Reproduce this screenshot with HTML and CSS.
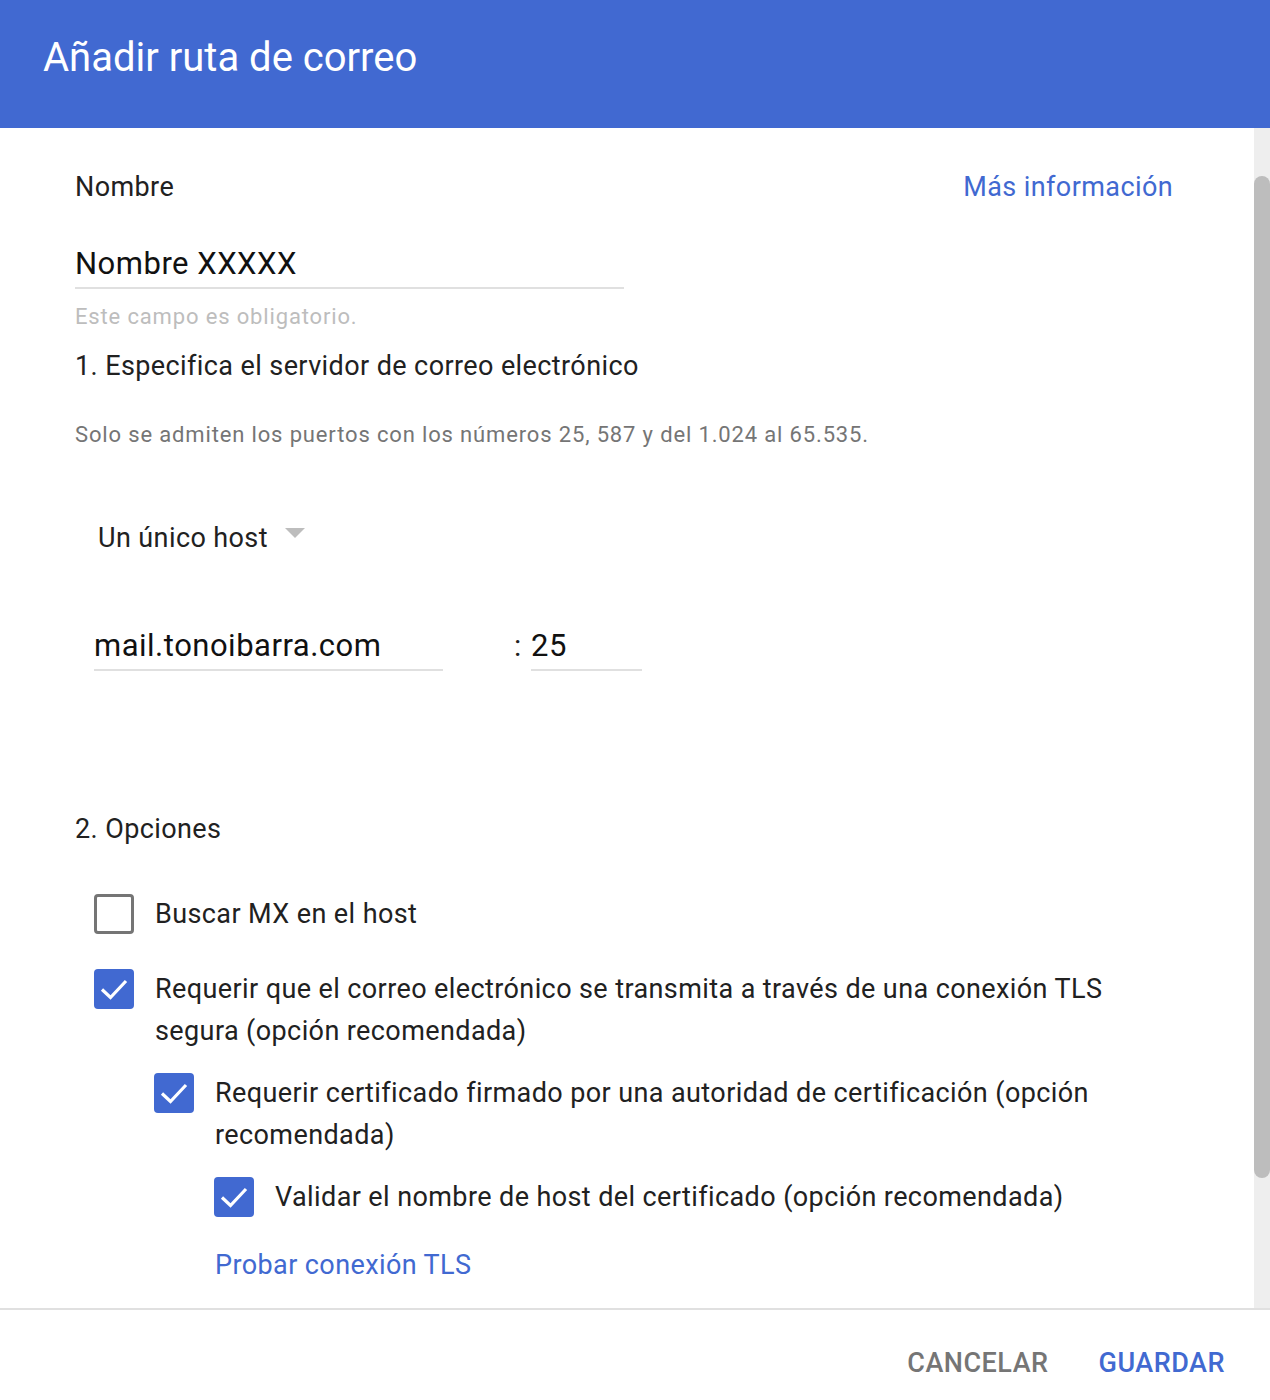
FILE: index.html
```html
<!DOCTYPE html>
<html lang="es">

<head>
    <meta charset="UTF-8">
    <meta name="viewport" content="width=device-width, initial-scale=1.0">
    <title>Añadir ruta de correo</title>
    <link rel="stylesheet" href="styles.css">
</head>

<body>
    <div class="dialog">
        <div class="header">
            <h1>Añadir ruta de correo</h1>
        </div>

        <div class="main">
            <div class="content">
                <div class="name-row">
                    <span class="label">Nombre</span>
                    <a class="link" href="#">Más información</a>
                </div>

                <div class="field name-field">Nombre XXXXX</div>
                <div class="helper">Este campo es obligatorio.</div>

                <div class="section-title first">1. Especifica el servidor de correo electrónico</div>
                <div class="note">Solo se admiten los puertos con los números 25, 587 y del 1.024 al 65.535.</div>

                <div class="select">
                    <span>Un único host</span>
                    <span class="arrow"></span>
                </div>

                <div class="host-row">
                    <div class="field host-field">mail.tonoibarra.com</div>
                    <span class="colon">:</span>
                    <div class="field port-field">25</div>
                </div>

                <div class="section-title options">2. Opciones</div>

                <div class="check-row level-1 row-mx">
                    <span class="box"></span>
                    <span class="check-text">Buscar MX en el host</span>
                </div>

                <div class="check-row level-1 row-tls">
                    <span class="box checked">
                        <svg viewBox="0 0 40 40" width="40" height="40"><path d="M8 20.5 L16.5 28.5 L32 12" fill="none" stroke="#fff" stroke-width="3.2"/></svg>
                    </span>
                    <span class="check-text">Requerir que el correo electrónico se transmita a través de una conexión TLS segura (opción recomendada)</span>
                </div>

                <div class="check-row level-2">
                    <span class="box checked">
                        <svg viewBox="0 0 40 40" width="40" height="40"><path d="M8 20.5 L16.5 28.5 L32 12" fill="none" stroke="#fff" stroke-width="3.2"/></svg>
                    </span>
                    <span class="check-text">Requerir certificado firmado por una autoridad de certificación (opción recomendada)</span>
                </div>

                <div class="check-row level-3">
                    <span class="box checked">
                        <svg viewBox="0 0 40 40" width="40" height="40"><path d="M8 20.5 L16.5 28.5 L32 12" fill="none" stroke="#fff" stroke-width="3.2"/></svg>
                    </span>
                    <span class="check-text">Validar el nombre de host del certificado (opción recomendada)</span>
                </div>

                <a class="link test-link" href="#">Probar conexión TLS</a>
            </div>

            <div class="scrollbar">
                <div class="thumb"></div>
            </div>
        </div>

        <div class="footer">
            <button class="btn cancel">CANCELAR</button>
            <button class="btn save">GUARDAR</button>
        </div>
    </div>
</body>

</html>
```

FILE: styles.css
```css
body {
    margin: 0;
    padding: 0;
    font-family: Roboto, "Liberation Sans", sans-serif;
    background-color: #ffffff;
    color: #212121;
}

.dialog {
    width: 1270px;
}

.header {
    height: 128px;
    background-color: #4169d1;
    box-sizing: border-box;
    padding: 34px 0 0 43px;
}

.header h1 {
    margin: 0;
    font-size: 40px;
    font-weight: 400;
    line-height: 48px;
    color: #ffffff;
}

.main {
    display: flex;
    height: 1180px;
    overflow: hidden;
}

.content {
    flex: 1;
    padding: 41px 81px 0 75px;
    font-size: 27px;
    letter-spacing: 0.4px;
}

.scrollbar {
    width: 16px;
    background-color: #eeeeee;
}

.thumb {
    margin-top: 48px;
    height: 1002px;
    background-color: #bdbdbd;
    border-radius: 8px;
}

.name-row {
    display: flex;
    justify-content: space-between;
    line-height: 36px;
}

.link {
    color: #4169d1;
    text-decoration: none;
    line-height: 36px;
}

.field {
    font-size: 31px;
    letter-spacing: 0.5px;
    line-height: 40px;
    padding-bottom: 3px;
    border-bottom: 2px solid #e0e0e0;
    color: #111111;
}

.name-field {
    margin-top: 39px;
    width: 549px;
}

.helper {
    margin-top: 14px;
    font-size: 22px;
    letter-spacing: 0.85px;
    line-height: 28px;
    color: #bdbdbd;
}

.section-title {
    line-height: 36px;
}

.section-title.first {
    margin-top: 17px;
}

.note {
    margin-top: 37px;
    font-size: 22px;
    letter-spacing: 0.85px;
    line-height: 28px;
    color: #757575;
}

.select {
    display: flex;
    align-items: center;
    margin: 71px 0 0 23px;
    line-height: 36px;
}

.arrow {
    width: 0;
    height: 0;
    margin: 0 0 11px 17px;
    border-left: 10px solid transparent;
    border-right: 10px solid transparent;
    border-top: 10px solid #bdbdbd;
}

.host-row {
    display: flex;
    align-items: flex-start;
    margin: 70px 0 0 19px;
}

.host-field {
    width: 349px;
}

.colon {
    margin-left: 71px;
    width: 17px;
    font-size: 30px;
    line-height: 40px;
}

.port-field {
    width: 111px;
}

.section-title.options {
    margin-top: 140px;
}

.check-row {
    display: flex;
    align-items: flex-start;
    line-height: 42px;
}

.box {
    flex: 0 0 auto;
    width: 40px;
    height: 40px;
    box-sizing: border-box;
    margin-top: 1px;
    border: 3px solid #757575;
    border-radius: 4px;
}

.box.checked {
    border: none;
    background-color: #4169d1;
}

.box svg {
    display: block;
}

.check-text {
    margin-left: 21px;
    max-width: 960px;
}

.level-1 {
    margin-left: 19px;
}

.row-mx {
    margin-top: 46px;
}

.row-tls {
    margin-top: 33px;
}

.level-2 {
    margin: 20px 0 0 79px;
}

.level-3 {
    margin: 20px 0 0 139px;
}

.test-link {
    display: block;
    margin: 26px 0 0 140px;
    line-height: 42px;
}

.footer {
    display: flex;
    justify-content: flex-end;
    gap: 50px;
    border-top: 2px solid #e0e0e0;
    padding: 35px 45px 0 0;
}

.btn {
    background: none;
    border: none;
    padding: 0;
    font-family: Roboto, "Liberation Sans", sans-serif;
    font-size: 27px;
    font-weight: 500;
    letter-spacing: 0.5px;
    line-height: 36px;
    cursor: pointer;
}

.cancel {
    color: #757575;
}

.save {
    color: #4169d1;
}
```
